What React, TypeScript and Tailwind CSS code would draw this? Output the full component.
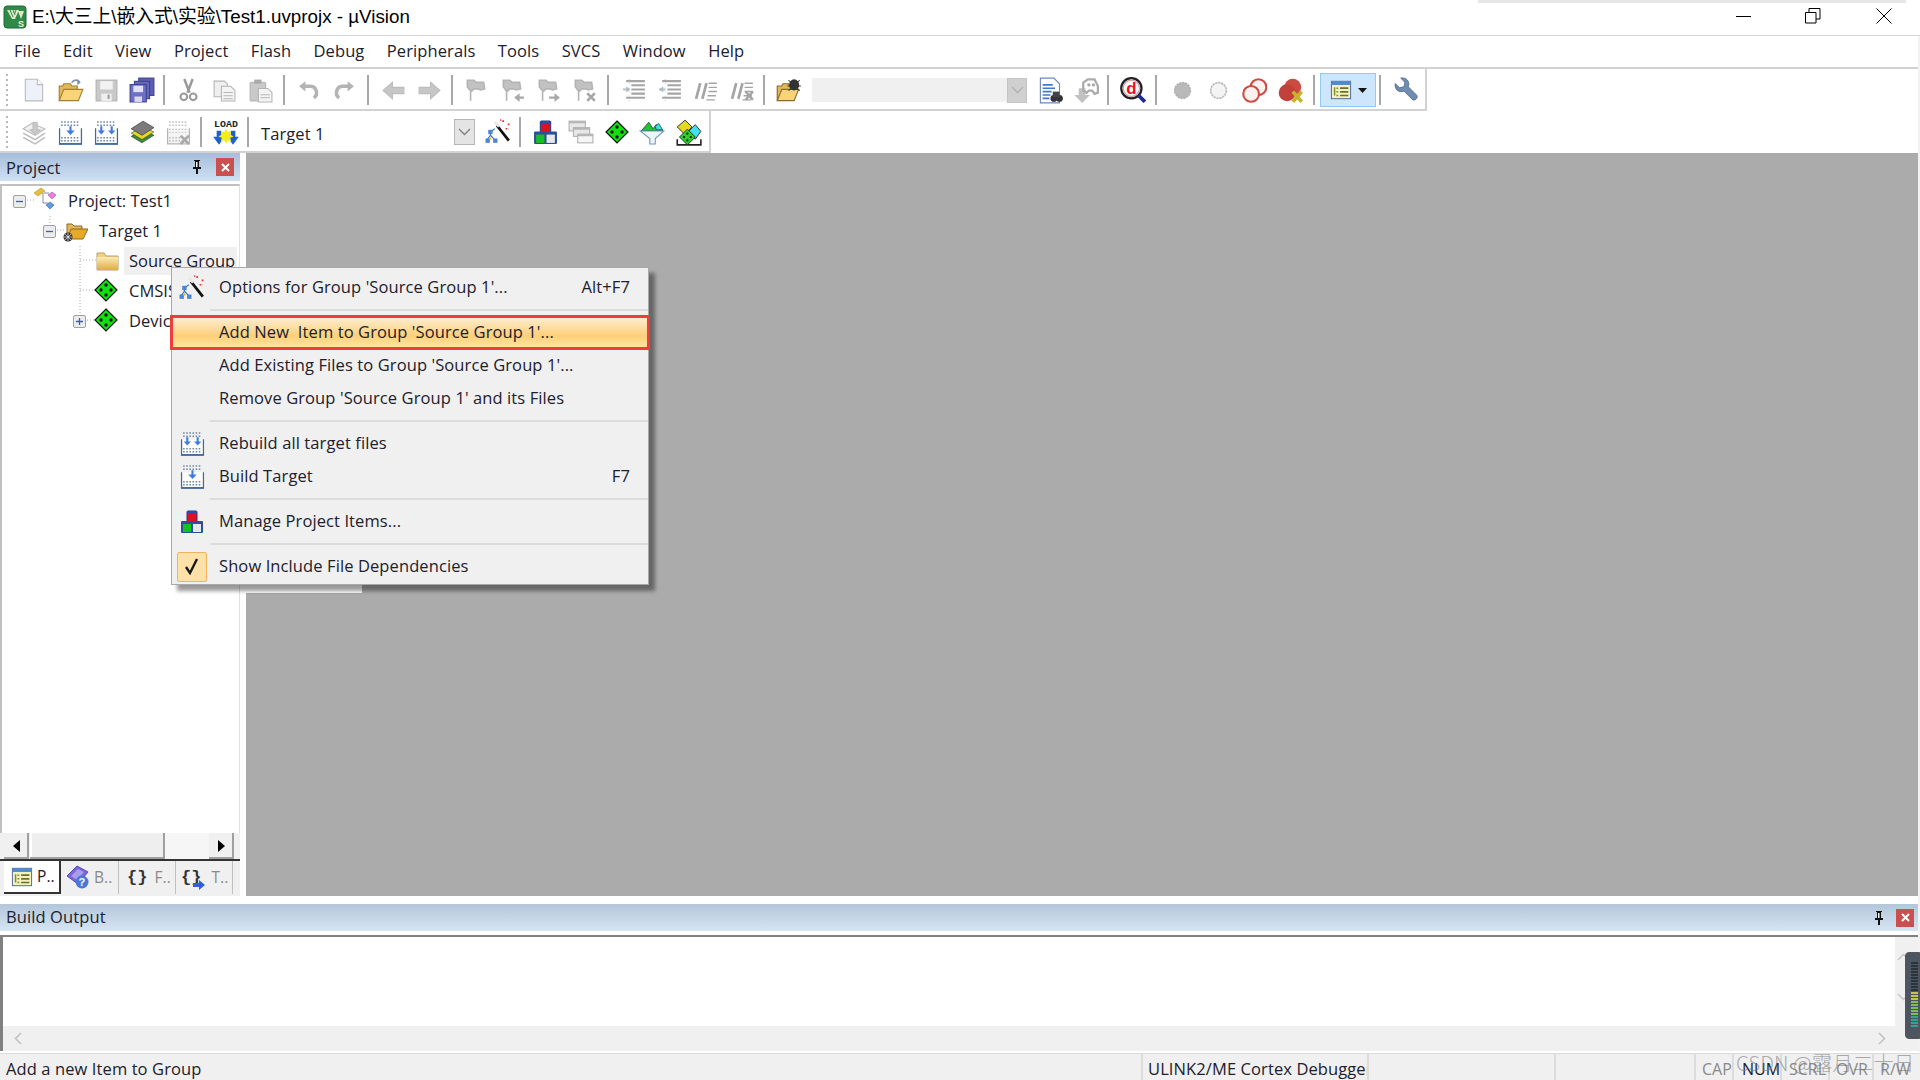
import React from "react";

const S = ({ children, className = "", s = 24 }: { children: React.ReactNode; className?: string; s?: number }) => (
  <svg viewBox="0 0 24 24" width={s} height={s} className={className}>{children}</svg>
);

const gr = "#b4b4b4";
const grd = "#9a9a9a";

const IcoNew = () => (
  <S s={26}><path d="M4 2h11l5 5v15H4z" fill="#eef1fa" stroke="#b9b9b9" /><path d="M15 2v5h5" fill="#fff" stroke="#b9b9b9" /></S>
);
const IcoOpen = () => (
  <S s={27}><path d="M2 21V8h3l1-2h6l1 2h5v3" fill="#e3b85a" stroke="#a57f2d" /><path d="M2 21l4-10h17l-4 10z" fill="#f7d37a" stroke="#a57f2d" /><path d="M13 5c2-3 6-3 7 0" fill="none" stroke="#7f93a8" strokeWidth="1.6" /><path d="M18 2l3 3-3 2z" fill="#7f93a8" /></S>
);
const IcoSave = () => (
  <S s={25}><rect x="2" y="2" width="20" height="20" fill="#c9c9c9" stroke="#b0b0b0" /><rect x="6" y="3" width="12" height="8" fill="#f2f2f2" /><rect x="7" y="15" width="10" height="7" fill="#efefef" /><rect x="13" y="16" width="2" height="4" fill="#999" /></S>
);
const IcoSaveAll = () => (
  <S s={26}><rect x="9" y="1" width="14" height="16" fill="#5d5fb0" stroke="#3f4190" /><rect x="5" y="4" width="14" height="16" fill="#6567bb" stroke="#3f4190" /><rect x="1" y="7" width="15" height="16" fill="#6d6fc6" stroke="#3f4190" /><rect x="4" y="8" width="9" height="6" fill="#dfe0f5" /><rect x="5" y="18" width="7" height="5" fill="#d9daf0" /></S>
);
const IcoCut = () => (
  <S s={25}><path d="M8 1l5 13M16 1l-5 13" stroke={grd} strokeWidth="2.4" fill="none" /><circle cx="7.5" cy="18" r="3.2" fill="none" stroke={grd} strokeWidth="2" /><circle cx="16.5" cy="18" r="3.2" fill="none" stroke={grd} strokeWidth="2" /></S>
);
const IcoCopy = () => (
  <S s={25}><path d="M2 3h10l3 3v12H2z" fill="#efefef" stroke={gr} /><path d="M9 8h9l4 4v10H9z" fill="#f4f4f4" stroke={gr} /><path d="M11 14h9M11 17h9M11 20h9" stroke={gr} /></S>
);
const IcoPaste = () => (
  <S s={25}><rect x="2" y="4" width="15" height="18" rx="1" fill="#c9c9c9" stroke={gr} /><rect x="6" y="1.5" width="7" height="4" fill="#aaa" /><path d="M10 10h9l4 4v9H10z" fill="#f4f4f4" stroke={gr} /><path d="M12 16h9M12 19h9" stroke={gr} /></S>
);
const IcoUndo = ({ flip }: { flip?: boolean }) => (
  <S s={25} className={flip ? "-scale-x-100" : ""}><path d="M8 8h6a6 6 0 0 1 3 11" fill="none" stroke={gr} strokeWidth="3.4" /><path d="M9 3v10L3 8z" fill={gr} /></S>
);
const IcoArrow = ({ flip }: { flip?: boolean }) => (
  <S s={25} className={flip ? "-scale-x-100" : ""}><path d="M2 12l9-8v5h11v6H11v5z" fill="#c6c6c6" stroke="#bdbdbd" /></S>
);
const IcoFlag = ({ mark }: { mark?: "l" | "r" | "x" }) => (
  <S s={26}>
    <path d="M7 22V12M4 3h6l2 2h7l1 6-4 1-2-1h-4l-2 2H7L4 9z" fill="#c2c2c2" stroke="#b4b4b4" strokeWidth="1.5" />
    {mark === "l" && <path d="M14 19l5-4v3h4v2h-4v3z" fill="#a8a8a8" />}
    {mark === "r" && <path d="M23 19l-5-4v3h-5v2h5v3z" fill="#a8a8a8" />}
    {mark === "x" && <path d="M15 15l7 7m0-7l-7 7" stroke="#a8a8a8" strokeWidth="2.4" />}
  </S>
);
const IcoIndent = ({ flip }: { flip?: boolean }) => (
  <S s={25}>
    <path d="M4 3h18M9 7h13M9 11h13M9 15h13M4 19h18" stroke="#a5a5a5" strokeWidth="2" />
    <path d="M1 11h6" stroke="#b9c5cc" strokeWidth="2" />
    <path d={flip ? "M1 11l4-3v6z" : "M8 11l-4-3v6z"} fill="#b0bcc4" />
    <path d="M7 1v22" stroke="#c9c9c9" strokeDasharray="1 3" />
  </S>
);
const IcoComment = ({ x }: { x?: boolean }) => (
  <S s={25}>
    <path d="M6 5L2 20M12 5L8 20" stroke="#a5a5a5" strokeWidth="2.6" />
    <path d="M14 5h8M14 9h8M14 13h8M13 17h8M12 21h8" stroke="#a5a5a5" strokeWidth="1.4" />
    {x && <path d="M15 13l7 8m0-8l-7 8" stroke="#a5a5a5" strokeWidth="2.4" />}
  </S>
);
const IcoOpenBug = () => (
  <S s={27}><path d="M2 21V8h4l1-2h5l1 2h4v3" fill="#e3b85a" stroke="#8a6b25" /><path d="M2 21l4-10h15l-4 10z" fill="#f7d37a" stroke="#8a6b25" /><ellipse cx="17" cy="7" rx="4.5" ry="5" fill="#333" /><path d="M12 3l3 2M22 3l-3 2M11 8h3M20 8h3M12 12l3-2M22 12l-3-2" stroke="#333" /></S>
);
const IcoFindDoc = () => (
  <S s={27}><path d="M3 1h12l5 5v17H3z" fill="#fff" stroke="#6b89ba" /><path d="M5 7h9M5 10h11M5 13h8M5 16h7M5 19h6" stroke="#3f7ad0" strokeWidth="1.4" /><circle cx="15" cy="19" r="3" fill="#333" /><circle cx="20" cy="19" r="3" fill="#333" /><rect x="14" y="13" width="6" height="5" fill="#444" /></S>
);
const IcoFindGray = () => (
  <S s={27}><path d="M6 10h6v6h4l-7 7-7-7h4z" fill="#c2c2c2" /><path d="M10 5l4-3h6l3 6v6l-3 1-2-3h-3l-2 2-3-2z" fill="none" stroke="#aaa" strokeWidth="2" /><circle cx="15" cy="7" r="1.5" fill="#aaa" /><circle cx="19" cy="7" r="1.5" fill="#aaa" /></S>
);
const IcoDbg = () => (
  <S s={27}>
    <circle cx="11" cy="10" r="9" fill="#fff" stroke="#222" strokeWidth="2" />
    <circle cx="11" cy="10" r="7.2" fill="none" stroke="#d9a" strokeWidth="1" />
    <path d="M17 16l6 6" stroke="#1d2b8f" strokeWidth="3.4" />
    <text x="11" y="15" textAnchor="middle" fontSize="15" fontWeight="700" fontFamily="Liberation Sans" fill="#e3102b">d</text>
  </S>
);
const IcoDot = ({ fill, stroke }: { fill: string; stroke: string }) => (
  <S s={25}><circle cx="12" cy="12" r="7.5" fill={fill} stroke={stroke} strokeWidth="1.6" strokeDasharray="2.2 0.7" /></S>
);
const IcoRings = () => (
  <S s={27}><circle cx="15.5" cy="9" r="7" fill="#fdf1ef" stroke="#cc4a42" strokeWidth="1.8" /><circle cx="9" cy="15" r="7" fill="#fdf1ef" stroke="#cc4a42" strokeWidth="1.8" /></S>
);
const IcoRedX = () => (
  <S s={27}><circle cx="14" cy="9" r="7.5" fill="#cc4a42" /><circle cx="9" cy="14" r="7.5" fill="#c23f3a" /><path d="M14 13l8 9m0-9l-8 9" stroke="#c9b32a" strokeWidth="3.2" /></S>
);
const IcoWin = ({ s = 22 }: { s?: number }) => (
  <S s={s}>
    <rect x="1.5" y="2.5" width="21" height="19" fill="#f3f1c4" stroke="#46608a" />
    <rect x="1.5" y="2.5" width="21" height="4" fill="#4f8ad0" />
    <path d="M5 9v9M7 10h2M7 14h2M7 18h2" stroke="#7a8f2a" strokeWidth="1.6" />
    <path d="M11 10h9M11 14h9M11 18h9" stroke="#67712a" strokeWidth="1.8" />
  </S>
);
const IcoWrench = () => (
  <S s={26}><path d="M3 6l4 4 4-1 1-4-4-4c5-1 9 3 7 8l8 8c1 3-2 5-4 4l-8-8C6 15 2 11 3 6z" fill="#6f8cb1" stroke="#52688a" strokeWidth="0.8" /></S>
);

const IcoBatch = () => (
  <S s={26}>
    <path d="M2 9l8-5 12 5-9 6z" fill="#f0f0f0" stroke="#bbb" />
    <path d="M2 13l11 6 9-6M2 17l11 6 9-6" fill="none" stroke="#bbb" strokeWidth="1.3" />
    <path d="M11 3v7h-3l5 4 5-4h-3V3z" fill="#c9c9c9" stroke="#aaa" strokeWidth="0.6" />
  </S>
);
const Dots = ({ c }: { c: string }) => (
  <>
    <path d="M3 2h18M3 5h18" stroke={c} strokeWidth="1.4" strokeDasharray="1.5 1.5" />
    <path d="M3 17h18M3 20h18" stroke={c} strokeWidth="1.4" strokeDasharray="1.5 1.5" />
  </>
);
const IcoBuild = ({ two, s = 25 }: { two?: boolean; s?: number }) => (
  <S s={s}>
    <path d="M1.5 8v15h21V8" fill="#fdfdfd" stroke="#3f6a9c" strokeWidth="1.2" />
    <path d="M1 23h22" stroke="#3f6a9c" strokeWidth="1.6" />
    <Dots c="#6d88a8" />
    {two ? (
      <path d="M6 6h2v4h2.5L7 14 3.5 10H6zM16 6h2v4h2.5L17 14l-3.5-4H16z" fill="#3d7ce0" />
    ) : (
      <path d="M11 6h2v4h3l-4 4.5L8 10h3z" fill="#3d7ce0" />
    )}
  </S>
);
const IcoStack = () => (
  <S s={26}>
    <path d="M2 16l11-6 10 5-11 7z" fill="#3c8a3c" stroke="#222" strokeWidth="0.5" />
    <path d="M2 13l11-6 10 5-11 7z" fill="#e3d81e" stroke="#333" strokeWidth="0.5" />
    <path d="M2 9l11-7 10 6-11 7z" fill="#7b7b7b" stroke="#444" strokeWidth="0.7" />
  </S>
);
const IcoBuildX = () => (
  <S s={25}>
    <path d="M1.5 8v15h21V8" fill="#f4f4f4" stroke="#b5b5b5" strokeWidth="1.2" />
    <Dots c="#bdbdbd" />
    <path d="M3 9h18M3 12h18" stroke="#c9c9c9" strokeDasharray="1.5 1.5" />
    <path d="M14 15l8 8m0-8l-8 8" stroke="#aaa" strokeWidth="2.6" />
  </S>
);
const IcoLoad = () => (
  <S s={28}>
    <text x="12" y="8" textAnchor="middle" fontSize="8.5" fontWeight="700" fontFamily="Liberation Mono" fill="#222">LOAD</text>
    <path d="M4 11h4v5h3l-5 7-5-7h3zM16 11h4v5h3l-5 7-5-7h3z" fill="#2160cf" />
    <path d="M12 9l1.5 3 3-1-1 3 3 2-3 1 1 3-3-1-1.5 3-1.5-3-3 1 1-3-3-1 3-2-1-3 3 1z" fill="#f2ee18" />
  </S>
);
const IcoWizard = ({ s = 26 }: { s?: number }) => (
  <S s={s}>
    <path d="M11 6l11 14" stroke="#111" strokeWidth="2.6" />
    <path d="M9 3l4 4" stroke="#e8e8e8" strokeWidth="2.6" />
    <path d="M16 2h2M21 5h2M14 1h1M19 9h3" stroke="#d33" strokeWidth="1.6" strokeDasharray="1.6 1.2" />
    <path d="M5 15v-3l4-3M5 15l-3 4M5 15l4 4" stroke="#3670c7" strokeWidth="1" fill="none" />
    <rect x="3" y="10" width="4" height="4" fill="#4b83d9" />
    <rect x="0.5" y="18" width="4" height="4" fill="#4b83d9" />
    <rect x="7.5" y="18" width="4" height="4" fill="#4b83d9" />
    <rect x="4" y="17" width="2" height="2" fill="#e6c200" />
  </S>
);
const IcoManage = ({ s = 25 }: { s?: number }) => (
  <S s={s}>
    <rect x="7" y="1" width="10" height="11" rx="1" fill="#e2101a" stroke="#1f3f83" strokeWidth="1" />
    <rect x="7" y="1" width="10" height="3" fill="#2b4f9c" />
    <rect x="1" y="11" width="22" height="12" rx="1" fill="#2b4f9c" />
    <rect x="3" y="14" width="8" height="8" fill="#12c21e" />
    <rect x="13" y="14" width="8" height="8" fill="#e7e7e7" />
  </S>
);
const IcoPanes = () => (
  <S s={26}>
    <rect x="1" y="2" width="15" height="9" fill="#e8e8e8" stroke="#b0b0b0" /><rect x="5" y="8" width="15" height="8" fill="#e8e8e8" stroke="#b0b0b0" /><rect x="9" y="14" width="14" height="8" fill="#f6f6f6" stroke="#b0b0b0" /><path d="M9 14h14v2H9zM5 8h15v2H5zM1 2h15v2H1z" fill="#b5b5b5" />
  </S>
);
const Diamond = ({ s = 24 }: { s?: number }) => (
  <S s={s}>
    <path d="M12 1l11 11-11 11L1 12z" fill="#11e011" stroke="#111" strokeWidth="1.2" />
    <circle cx="12" cy="7" r="1.7" fill="#111" /><circle cx="12" cy="17" r="1.7" fill="#111" /><circle cx="7" cy="12" r="1.7" fill="#111" /><circle cx="17" cy="12" r="1.7" fill="#111" />
  </S>
);
const IcoFunnel = () => (
  <S s={26}>
    <path d="M2 11L9 3l4 6 3-4 6 6z" fill="#22c22c" stroke="#134" strokeWidth="0.7" />
    <path d="M15 7l3-3 4 6h-6z" fill="#3fdbe6" stroke="#134" strokeWidth="0.6" />
    <path d="M1 11h22l-8 7v5h-5v-5z" fill="#eef6fb" stroke="#6d9bb6" />
  </S>
);
const IcoDice = () => (
  <S s={27}>
    <path d="M2 18v5h21v-5" fill="none" stroke="#222" strokeWidth="1.4" />
    <path d="M9 1l6 6-6 7-7-7z" fill="#e3da1d" stroke="#222" strokeWidth="0.8" />
    <path d="M18 5l5 6-5 7-6-7z" fill="#40e0ef" stroke="#222" strokeWidth="0.8" />
    <path d="M11 9l7 7-7 7-7-7z" fill="#2ad32a" stroke="#222" strokeWidth="0.8" />
    <circle cx="11" cy="13" r="1" fill="#111" /><circle cx="11" cy="19" r="1" fill="#111" /><circle cx="8" cy="16" r="1" fill="#111" /><circle cx="14" cy="16" r="1" fill="#111" />
  </S>
);

const Cell = ({ children }: { children: React.ReactNode }) => (
  <div className="flex h-full w-9 shrink-0 items-center justify-center">{children}</div>
);
const Sep = ({ w }: { w: string }) => (
  <div className={`flex h-full shrink-0 items-center ${w}`}>
    <div className="ml-[3px] h-[30px] w-[2px] bg-[#a8a8a8]" />
  </div>
);
const Grip = () => (
  <div className="flex h-full w-4 shrink-0 flex-col justify-center gap-[3px] pl-[6px]">
    {[0, 1, 2, 3, 4, 5, 6].map((i) => (
      <div key={i} className="h-[2px] w-[2px] bg-[#b8b8b8]" />
    ))}
  </div>
);
const Chevron = ({ c = "#7d7d7d" }: { c?: string }) => (
  <svg width="13" height="8" viewBox="0 0 13 8"><path d="M1 1l5.500 5.500L12 1" fill="none" stroke={c} strokeWidth="1.3" /></svg>
);

const Pin = () => (
  <svg width="12" height="16" viewBox="0 0 12 16"><path d="M3 1h6v1H8v6h2v2H7v5H5v-5H2V8h2V2H3z" fill="#111" /><rect x="5" y="3" width="1.5" height="5" fill="#fff" /></svg>
);
const Close = () => (
  <div className="flex h-[18px] w-[18px] items-center justify-center bg-[#c9504f]">
    <svg width="9" height="9" viewBox="0 0 9 9"><path d="M1 1l7 7m0-7L1 8" stroke="#fff" strokeWidth="2" /></svg>
  </div>
);

const Box = ({ plus }: { plus?: boolean }) => (
  <div className="flex h-[13px] w-[13px] shrink-0 items-center justify-center rounded-[2px] border border-[#a0a0a0] bg-[#ececec]">
    <svg width="9" height="9" viewBox="0 0 9 9">
      <path d={plus ? "M1 4.500h7M4.500 1v7" : "M1 4.500h7"} stroke="#3f5f9f" strokeWidth="1.3" />
    </svg>
  </div>
);

const MenuRow = ({ icon, text, key2, hot }: { icon?: React.ReactNode; text: string; key2?: string; hot?: boolean }) => (
  <div
    className={`relative flex h-[33px] items-center ${hot ? "bg-gradient-to-b from-[#fdf0d8] via-[#fdcf78] via-60% to-[#fee9a4]" : ""}`}
  >
    <div className="flex w-[47px] shrink-0 items-center justify-center pr-[7px]">{icon}</div>
    <span className="flex-1 whitespace-pre">{text}</span>
    {key2 && <span className="pr-[18px]">{key2}</span>}
    {hot && <div className="absolute -inset-x-[2px] -top-[1px] -bottom-[1px] border-[3px] border-[#f23b3b]" />}
  </div>
);
const MenuSep = () => (
  <div className="flex h-[12px] items-center pl-[38px]">
    <div className="h-[2px] flex-1 bg-[#dcdcdc]" />
  </div>
);

const MENUS = ["File", "Edit", "View", "Project", "Flash", "Debug", "Peripherals", "Tools", "SVCS", "Window", "Help"];

export default function App() {
  return (
    <div className="relative flex h-[1080px] w-[1920px] flex-col overflow-hidden bg-white font-['Open_Sans','Noto_Sans_CJK_SC',sans-serif] text-[16.5px] tracking-[0.1px] text-[#20202c]">
      {/* title */}
      <div className="relative flex h-[36px] shrink-0 items-center border-b border-[#d5d5d5] pl-[3px] tracking-normal">
        <svg width="24" height="24" viewBox="0 0 24 24" className="mr-[5px] mb-[1px]">
          <rect x="1" y="1" width="22" height="22" rx="3" fill="#2f8a4a" stroke="#1f6a35" />
          <path d="M4 5h12l-4 9h-3z" fill="#dfe9c4" />
          <path d="M7 5l3 7M10 5l2 5M13 5l-1.500 4" stroke="#2f8a4a" strokeWidth="1" />
          <path d="M15 6h6l-3 8z" fill="#dfe9c4" />
          <rect x="14" y="14" width="8" height="8" fill="#2f8a4a" />
          <text x="18" y="21.500" textAnchor="middle" fontSize="9" fontWeight="700" fontFamily="Liberation Sans" fill="#f3f3d0">S</text>
        </svg>
        <span className="font-['Liberation_Sans','Noto_Sans_CJK_SC',sans-serif] text-[18.8px] whitespace-pre text-black">E:\大三上\嵌入式\实验\Test1.uvprojx - µVision</span>
        <div className="absolute top-0 left-[1478px] h-[3px] w-[428px] bg-[#e6e6e6]" />
        <div className="ml-auto flex h-full items-center">
          <svg width="16" height="16" viewBox="0 0 16 16" className="mr-[53px] mb-[3px]"><path d="M0 8.500h15" stroke="#000" /></svg>
          <svg width="16" height="16" viewBox="0 0 16 16" className="mr-[55px] mb-[3px]"><path d="M.5 4.500h10.500v10.500H.5zM4 4.500V.5h11v10.500h-4" fill="none" stroke="#000" /></svg>
          <svg width="16" height="16" viewBox="0 0 16 16" className="mr-[28px] mb-[3px]"><path d="M.5.5l15 15m0-15l-15 15" stroke="#000" /></svg>
        </div>
      </div>
      {/* menu */}
      <div className="flex h-[33px] shrink-0 items-center gap-[22.4px] border-b-2 border-[#d2d2d2] pl-[14px]">
        {MENUS.map((m) => (
          <span key={m}>{m}</span>
        ))}
      </div>
      {/* toolbar 1 */}
      <div className="flex h-[42px] shrink-0">
        <div className="flex w-[1427px] items-center border-r-2 border-b-2 border-[#d2d2d2] pt-[2px]">
          <Grip />
          <Cell><IcoNew /></Cell><Cell><IcoOpen /></Cell><Cell><IcoSave /></Cell><Cell><IcoSaveAll /></Cell>
          <Sep w="w-[10px]" />
          <Cell><IcoCut /></Cell><Cell><IcoCopy /></Cell><Cell><IcoPaste /></Cell>
          <Sep w="w-[12px] pl-[2px]" />
          <Cell><IcoUndo /></Cell><Cell><IcoUndo flip /></Cell>
          <Sep w="w-[13px] pl-[2px]" />
          <Cell><IcoArrow /></Cell><Cell><IcoArrow flip /></Cell>
          <Sep w="w-[11px] pl-[1px]" />
          <Cell><IcoFlag /></Cell><Cell><IcoFlag mark="l" /></Cell><Cell><IcoFlag mark="r" /></Cell><Cell><IcoFlag mark="x" /></Cell>
          <Sep w="w-[14px] pl-[2px]" />
          <Cell><IcoIndent /></Cell><Cell><IcoIndent flip /></Cell><Cell><IcoComment /></Cell><Cell><IcoComment x /></Cell>
          <Sep w="w-[10px]" />
          <Cell><IcoOpenBug /></Cell>
          <div className="ml-[6px] h-[24px] w-[195px] shrink-0 bg-[#f0f0f0]" />
          <div className="flex h-[25px] w-[20px] shrink-0 items-center justify-center border border-[#c4c4c4] bg-[#d0d0d0]"><Chevron c="#b0b0b0" /></div>
          <div className="ml-[5px] flex w-[36px] shrink-0 justify-center"><IcoFindDoc /></div>
          <div className="flex w-[34px] shrink-0 justify-center"><IcoFindGray /></div>
          <Sep w="w-[12px] pl-[2px]" />
          <div className="flex w-[36px] shrink-0 justify-center"><IcoDbg /></div>
          <Sep w="w-[14px] pl-[2px]" />
          <Cell><IcoDot fill="#b9b9b9" stroke="#b0b0b0" /></Cell>
          <Cell><IcoDot fill="#f4f4f4" stroke="#b9b9b9" /></Cell>
          <Cell><IcoRings /></Cell>
          <Cell><IcoRedX /></Cell>
          <Sep w="w-[12px] pl-[2px]" />
          <div className="flex h-[34px] w-[56px] shrink-0 items-center gap-[6px] border border-[#92c9f7] bg-[#cde6fb] pl-[9px]">
            <IcoWin />
            <svg width="9" height="5" viewBox="0 0 9 5"><path d="M0 0h9L4.500 5z" fill="#111" /></svg>
          </div>
          <Sep w="w-[6px]" />
          <div className="ml-[10px] flex w-[26px] shrink-0 justify-center"><IcoWrench /></div>
        </div>
      </div>
      {/* toolbar 2 */}
      <div className="flex h-[42px] shrink-0">
        <div className="flex w-[711px] items-center border-r-2 border-b-2 border-[#d2d2d2] pt-[2px]">
          <Grip />
          <Cell><IcoBatch /></Cell>
          <Cell><IcoBuild /></Cell><Cell><IcoBuild two /></Cell><Cell><IcoStack /></Cell><Cell><IcoBuildX /></Cell>
          <Sep w="w-[12px] pl-[1px]" />
          <Cell><IcoLoad /></Cell>
          <Sep w="w-[11px]" />
          <span className="w-[199px] shrink-0 pt-[5px] pl-[6px]">Target 1</span>
          <div className="flex h-[26px] w-[21px] shrink-0 items-center justify-center border border-[#b5b5b5] bg-[#e4e4e4]"><Chevron /></div>
          <div className="ml-[9px] flex w-[28px] shrink-0 justify-center"><IcoWizard /></div>
          <Sep w="w-[16px] pl-[4px]" />
          <div className="flex w-[35px] shrink-0 justify-center"><IcoManage /></div>
          <div className="flex w-[36px] shrink-0 justify-center"><IcoPanes /></div>
          <div className="flex w-[35px] shrink-0 justify-center"><Diamond /></div>
          <div className="flex w-[36px] shrink-0 justify-center"><IcoFunnel /></div>
          <div className="flex w-[36px] shrink-0 justify-center"><IcoDice /></div>
        </div>
      </div>
      {/* main */}
      <div className="flex h-[743px] shrink-0">
        <div className="flex w-[240px] shrink-0 flex-col">
          <div className="flex h-[28px] shrink-0 items-center bg-gradient-to-b from-[#a6bedb] to-[#cfe0f2] px-[6px]">
            <span className="flex-1 pt-[2px]">Project</span>
            <div className="mr-[13px] flex"><Pin /></div>
            <Close />
          </div>
          <div className="relative mt-[3px] flex-1 overflow-hidden border-t-2 border-r border-l-2 border-[#c0c0c0] border-r-[#e0e0e0] bg-white tracking-normal">
            <svg width="238" height="150" className="absolute top-0 left-0">
              <g stroke="#aaa" strokeDasharray="1 2" fill="none" transform="translate(-2,-2)">
                <path d="M27 16h8M50 32v10M57 46h7M80 62v70M80 76h16M80 106h16M87 136h9" />
              </g>
            </svg>
            <div className="relative flex h-[30px] items-center pl-[11px]">
              <Box />
              <svg width="24" height="24" viewBox="0 0 24 24" className="mb-[4px] ml-[7px]">
                <path d="M1 6l7-5 4 3-7 5z" fill="#e3c03c" stroke="#b6942a" strokeWidth="0.6" />
                <path d="M15 8l4-3 4 3-4 4z" fill="#ea7fe0" stroke="#a24d9d" strokeWidth="0.6" />
                <path d="M13 18l4-3 4 3-4 4z" fill="#5d9be6" stroke="#36649f" strokeWidth="0.6" />
                <path d="M10 6v10h5M11 6h5" stroke="#88a" fill="none" />
              </svg>
              <span className="ml-[11px]">Project: Test1</span>
            </div>
            <div className="relative flex h-[30px] items-center pl-[41px]">
              <Box />
              <svg width="25" height="24" viewBox="0 0 25 24" className="ml-[7px]">
                <path d="M4 17V5h5l2 2h8v4" fill="#e3b85a" stroke="#8a6b25" />
                <path d="M4 20l4-10h17l-5 10z" fill="#e9a928" stroke="#8a6b25" />
                <circle cx="5" cy="18" r="4.500" fill="#333" />
                <path d="M1 18h8M5 14v8M2 15l6 6M8 15l-6 6" stroke="#eee" strokeWidth="0.7" />
              </svg>
              <span className="ml-[11px]">Target 1</span>
            </div>
            <div className="relative flex h-[30px] items-center pl-[94px]">
              <svg width="23" height="20" viewBox="0 0 23 20"><defs><linearGradient id="fg" x1="0" y1="0" x2="0" y2="1"><stop offset="0" stopColor="#fbeab8" /><stop offset="1" stopColor="#e0ad3e" /></linearGradient></defs><path d="M1 19V2h7l2 3h12v14z" fill="#f5d27a" stroke="#b0a070" /><path d="M1 6h21v13H1z" fill="url(#fg)" /></svg>
              <div className="ml-[5px] h-[28px] flex-1 overflow-hidden bg-[#f0f0f0] pl-[5px] leading-[28px] whitespace-nowrap">Source Group 1</div>
              <div className="w-[2px]" />
            </div>
            <div className="relative flex h-[30px] items-center pl-[92px]">
              <div className="mb-[3px] flex"><Diamond /></div>
              <span className="ml-[11px]">CMSIS</span>
            </div>
            <div className="relative flex h-[30px] items-center pl-[71px]">
              <Box plus />
              <div className="mb-[3px] ml-[8px] flex"><Diamond /></div>
              <span className="ml-[11px]">Device</span>
            </div>
          </div>
          {/* scrollbar */}
          <div className="flex h-[28px] shrink-0 border-b-2 border-[#333] bg-[#f0f0f0] pr-[6px] pl-[4px]">
            <div className="flex h-full w-[25px] items-center justify-center bg-[#f0f0f0] shadow-[inset_-2px_-2px_0_#a0a0a0]"><div className="h-0 w-0 border-y-[6px] border-r-[7px] border-y-transparent border-r-black" /></div>
            <div className="ml-[1px] h-full w-[135px] bg-[#eeeeee] shadow-[inset_-2px_-2px_0_#a0a0a0,inset_2px_0_0_#fff]" />
            <div className="flex-1 bg-[#f6f6f6]" />
            <div className="flex h-full w-[25px] items-center justify-center bg-[#f0f0f0] shadow-[inset_-2px_-2px_0_#a0a0a0]"><div className="h-0 w-0 border-y-[6px] border-l-[7px] border-y-transparent border-l-black" /></div>
          </div>
          {/* tabs */}
          <div className="flex h-[35px] shrink-0 items-start bg-[#f0f0f0] pl-[4px] text-[15.5px]">
            <div className="flex h-[33px] w-[57px] shrink-0 items-center gap-[4px] border-r-2 border-b-2 border-[#333] bg-white pl-[7px]">
              <IcoWin /><span>P..</span>
            </div>
            <div className="flex h-[33px] w-[58px] shrink-0 items-center gap-[3px] border-r border-[#c0c0c0] pl-[5px] text-[#8a8a8a]">
              <svg width="25" height="25" viewBox="0 0 25 25"><path d="M1 11L11 1l11 6-10 12z" fill="#7a66d8" stroke="#5b45c0" /><path d="M5 11l7-7 6 3-7 8z" fill="#a99ceb" /><circle cx="16" cy="17" r="6.500" fill="#4a78d8" /><text x="16" y="21" textAnchor="middle" fontSize="11" fontWeight="700" fontFamily="Liberation Sans" fill="#fff">?</text></svg>
              <span>B..</span>
            </div>
            <div className="flex h-[33px] w-[57px] shrink-0 items-center gap-[7px] border-r border-[#c0c0c0] pl-[8px] text-[#8a8a8a]">
              <span className="font-['Liberation_Mono',monospace] text-[17px] font-bold tracking-normal text-[#333]">{"{}"}</span>
              <span>F..</span>
            </div>
            <div className="flex h-[33px] w-[57px] shrink-0 items-center gap-[2px] border-r border-[#c0c0c0] pl-[5px] text-[#8a8a8a]">
              <div className="relative flex">
                <span className="font-['Liberation_Mono',monospace] text-[17px] font-bold tracking-normal text-[#333]">{"{}"}</span>
                <svg width="12" height="10" viewBox="0 0 12 10" className="absolute -right-[4px] bottom-[0px]"><path d="M0 3h6V0l6 5-6 5V7H0z" fill="#2f5fd0" /></svg>
              </div>
              <span className="ml-[8px]">T..</span>
            </div>
          </div>
        </div>
        <div className="w-[6px] shrink-0" />
        <div className="flex-1 bg-[#ababab]" />
        <div className="w-[2px] shrink-0" />
      </div>
      {/* build output */}
      <div className="mt-[8px] flex h-[27px] shrink-0 items-center bg-gradient-to-b from-[#b3c6da] to-[#d6e5f3] px-[6px]">
        <span className="flex-1">Build Output</span>
        <div className="mr-[11px] flex"><Pin /></div>
        <Close />
      </div>
      <div className="relative mt-[4px] flex h-[116px] shrink-0 flex-col border-t-2 border-l-[3px] border-[#808080]">
        <div className="flex h-[89px] shrink-0">
          <div className="flex-1 bg-white" />
          <div className="flex w-[25px] flex-col items-center gap-[32px] bg-[#f0f0f0] pt-[16px] pr-[8px]">
            <div className="flex rotate-180"><Chevron c="#c2c2c2" /></div>
            <Chevron c="#c2c2c2" />
          </div>
        </div>
        <div className="flex h-[25px] shrink-0 items-center justify-between bg-[#f0f0f0] pr-[34px] pl-[11px]">
          <svg width="8" height="13" viewBox="0 0 8 13"><path d="M7 1L1.500 6.500 7 12" fill="none" stroke="#c2c2c2" strokeWidth="1.600" /></svg>
          <svg width="8" height="13" viewBox="0 0 8 13"><path d="M1 1l5.500 5.500L1 12" fill="none" stroke="#c2c2c2" strokeWidth="1.600" /></svg>
        </div>
      </div>
      {/* status */}
      <div className="relative mt-[2px] flex h-[28px] shrink-0 items-center border-t border-[#dcdcdc] bg-[#f0f0f0] whitespace-nowrap">
        <span className="w-[1141px] shrink-0 pt-[3px] pl-[6px]">Add a new Item to Group</span>
        <div className="flex h-full w-[228px] shrink-0 items-center overflow-hidden border-x-2 border-[#dcdcdc] pt-[3px] pl-[5px]">ULINK2/ME Cortex Debugger</div>
        <div className="h-full w-[187px] shrink-0 border-r-2 border-[#dcdcdc]" />
        <div className="h-full w-[140px] shrink-0 border-r-2 border-[#dcdcdc]" />
        <div className="flex h-full w-[38px] shrink-0 items-center overflow-hidden border-r-2 border-[#dcdcdc] pt-[3px] pl-[6px] text-[16px] tracking-normal text-[#8a8a8a]">CAP</div>
        <div className="flex h-full w-[48px] shrink-0 items-center overflow-hidden border-r-2 border-[#dcdcdc] pt-[3px] pl-[8px] text-[16px] tracking-normal">NUM</div>
        <div className="flex h-full w-[48px] shrink-0 items-center overflow-hidden border-r-2 border-[#dcdcdc] pt-[3px] pl-[7px] text-[16px] tracking-normal text-[#8a8a8a]">SCRL</div>
        <div className="flex h-full w-[44px] shrink-0 items-center overflow-hidden border-r-2 border-[#dcdcdc] pt-[3px] pl-[6px] text-[16px] tracking-normal text-[#8a8a8a]">OVR</div>
        <div className="flex h-full flex-1 items-center overflow-hidden pt-[3px] pl-[6px] text-[16px] tracking-normal text-[#8a8a8a]">R/W</div>
      </div>

      {/* right edge */}
      <div className="absolute top-[36px] right-0 bottom-[28px] w-[2px] bg-[#f2f2f2]" />

      {/* meter widget */}
      <div className="absolute top-[952px] right-0 flex h-[87px] w-[15px] flex-col gap-[1px] rounded-l-[4px] border border-[#555] bg-[#4c5560] pt-[9px] pl-[5px]">
        {Array.from({ length: 22 }).map((_, i) => (
          <div
            key={i}
            className="h-[2px] w-[7px] shrink-0"
            style={{ background: i < 10 ? "#2c333b" : i < 13 ? "#c9c34a" : i < 18 ? "#7dbd5a" : "#2fa58f" }}
          />
        ))}
      </div>

      {/* watermark */}
      <div className="absolute top-[1047px] left-[1736px] font-['Noto_Sans_CJK_SC',sans-serif] text-[20.5px] font-light tracking-normal whitespace-nowrap text-[#77777799]">CSDN @露月二十日</div>

      {/* context menu */}
      <div className="absolute top-[585px] left-[240px] h-[8px] w-[122px] bg-white" />
      <div className="absolute top-[267px] left-[171px] w-[478px] border border-[#a8a8a8] bg-[#f0f0f0] pt-[3px] pb-[1px] shadow-[6px_6px_4px_rgba(0,0,0,0.4)]">
        <MenuRow icon={<IcoWizard />} text="Options for Group 'Source Group 1'..." key2="Alt+F7" />
        <MenuSep />
        <MenuRow hot text="Add New  Item to Group 'Source Group 1'..." />
        <MenuRow text="Add Existing Files to Group 'Source Group 1'..." />
        <MenuRow text="Remove Group 'Source Group 1' and its Files" />
        <MenuSep />
        <MenuRow icon={<IcoBuild two />} text="Rebuild all target files" />
        <MenuRow icon={<IcoBuild />} text="Build Target" key2="F7" />
        <MenuSep />
        <MenuRow icon={<IcoManage s={24} />} text="Manage Project Items..." />
        <MenuSep />
        <MenuRow
          icon={
            <div className="flex h-[30px] w-[30px] items-center justify-center rounded-[2px] border border-[#f2b25c] bg-[#fde1a9]">
              <svg width="14" height="17" viewBox="0 0 14 17"><path d="M1 9l4 6L12 1" fill="none" stroke="#1a1a1a" strokeWidth="2.400" /></svg>
            </div>
          }
          text="Show Include File Dependencies"
        />
      </div>
    </div>
  );
}
